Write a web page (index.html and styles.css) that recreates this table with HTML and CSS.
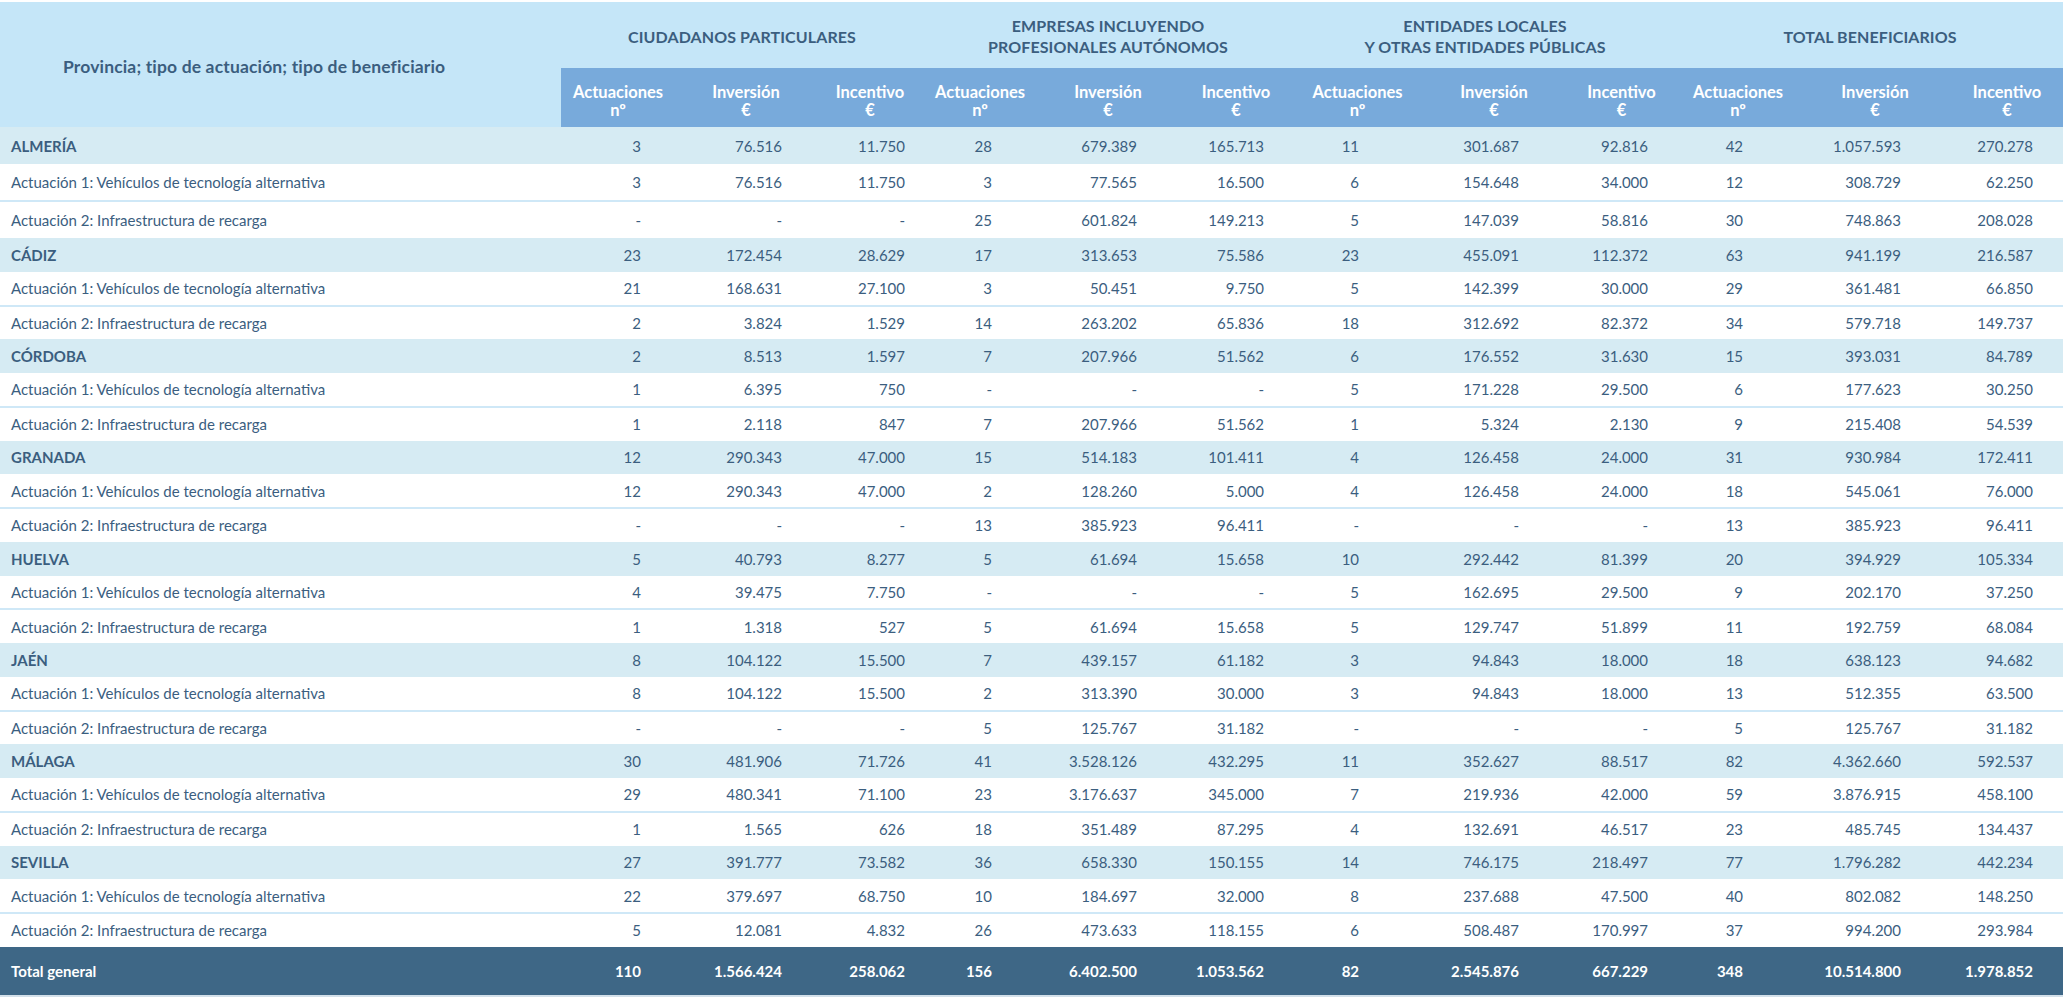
FILE: index.html
```html
<!DOCTYPE html>
<html lang="es">
<head>
<meta charset="utf-8">
<title>Actuaciones por provincia</title>
<link rel="stylesheet" href="styles.css">
</head>
<body>
<div class="wrap">
<table class="grid">
  <colgroup>
    <col class="c0">
    <col class="w114"><col class="w142"><col class="w106">
    <col class="w114"><col class="w142"><col class="w114">
    <col class="w129"><col class="w144"><col class="w111">
    <col class="w122"><col class="w152"><col class="w112">
  </colgroup>
  <thead>
    <tr class="h1">
      <th rowspan="2" class="lead">Provincia; tipo de actuación; tipo de beneficiario</th>
      <th colspan="3" class="grp">CIUDADANOS PARTICULARES</th>
      <th colspan="3" class="grp">EMPRESAS INCLUYENDO<br>PROFESIONALES AUTÓNOMOS</th>
      <th colspan="3" class="grp">ENTIDADES LOCALES<br>Y OTRAS ENTIDADES PÚBLICAS</th>
      <th colspan="3" class="grp">TOTAL BENEFICIARIOS</th>
    </tr>
    <tr class="h2">
      <th>Actuaciones<br>nº</th><th>Inversión<br>€</th><th>Incentivo<br>€</th>
      <th>Actuaciones<br>nº</th><th>Inversión<br>€</th><th>Incentivo<br>€</th>
      <th>Actuaciones<br>nº</th><th>Inversión<br>€</th><th>Incentivo<br>€</th>
      <th>Actuaciones<br>nº</th><th>Inversión<br>€</th><th>Incentivo<br>€</th>
    </tr>
  </thead>
  <tbody>
    <tr class="prov"><td>ALMERÍA</td><td>3</td><td>76.516</td><td>11.750</td><td>28</td><td>679.389</td><td>165.713</td><td>11</td><td>301.687</td><td>92.816</td><td>42</td><td>1.057.593</td><td>270.278</td></tr>
    <tr class="act1"><td>Actuación 1: Vehículos de tecnología alternativa</td><td>3</td><td>76.516</td><td>11.750</td><td>3</td><td>77.565</td><td>16.500</td><td>6</td><td>154.648</td><td>34.000</td><td>12</td><td>308.729</td><td>62.250</td></tr>
    <tr class="act2"><td>Actuación 2: Infraestructura de recarga</td><td>-</td><td>-</td><td>-</td><td>25</td><td>601.824</td><td>149.213</td><td>5</td><td>147.039</td><td>58.816</td><td>30</td><td>748.863</td><td>208.028</td></tr>

    <tr class="prov"><td>CÁDIZ</td><td>23</td><td>172.454</td><td>28.629</td><td>17</td><td>313.653</td><td>75.586</td><td>23</td><td>455.091</td><td>112.372</td><td>63</td><td>941.199</td><td>216.587</td></tr>
    <tr class="act1"><td>Actuación 1: Vehículos de tecnología alternativa</td><td>21</td><td>168.631</td><td>27.100</td><td>3</td><td>50.451</td><td>9.750</td><td>5</td><td>142.399</td><td>30.000</td><td>29</td><td>361.481</td><td>66.850</td></tr>
    <tr class="act2"><td>Actuación 2: Infraestructura de recarga</td><td>2</td><td>3.824</td><td>1.529</td><td>14</td><td>263.202</td><td>65.836</td><td>18</td><td>312.692</td><td>82.372</td><td>34</td><td>579.718</td><td>149.737</td></tr>

    <tr class="prov"><td>CÓRDOBA</td><td>2</td><td>8.513</td><td>1.597</td><td>7</td><td>207.966</td><td>51.562</td><td>6</td><td>176.552</td><td>31.630</td><td>15</td><td>393.031</td><td>84.789</td></tr>
    <tr class="act1"><td>Actuación 1: Vehículos de tecnología alternativa</td><td>1</td><td>6.395</td><td>750</td><td>-</td><td>-</td><td>-</td><td>5</td><td>171.228</td><td>29.500</td><td>6</td><td>177.623</td><td>30.250</td></tr>
    <tr class="act2"><td>Actuación 2: Infraestructura de recarga</td><td>1</td><td>2.118</td><td>847</td><td>7</td><td>207.966</td><td>51.562</td><td>1</td><td>5.324</td><td>2.130</td><td>9</td><td>215.408</td><td>54.539</td></tr>

    <tr class="prov"><td>GRANADA</td><td>12</td><td>290.343</td><td>47.000</td><td>15</td><td>514.183</td><td>101.411</td><td>4</td><td>126.458</td><td>24.000</td><td>31</td><td>930.984</td><td>172.411</td></tr>
    <tr class="act1"><td>Actuación 1: Vehículos de tecnología alternativa</td><td>12</td><td>290.343</td><td>47.000</td><td>2</td><td>128.260</td><td>5.000</td><td>4</td><td>126.458</td><td>24.000</td><td>18</td><td>545.061</td><td>76.000</td></tr>
    <tr class="act2"><td>Actuación 2: Infraestructura de recarga</td><td>-</td><td>-</td><td>-</td><td>13</td><td>385.923</td><td>96.411</td><td>-</td><td>-</td><td>-</td><td>13</td><td>385.923</td><td>96.411</td></tr>

    <tr class="prov"><td>HUELVA</td><td>5</td><td>40.793</td><td>8.277</td><td>5</td><td>61.694</td><td>15.658</td><td>10</td><td>292.442</td><td>81.399</td><td>20</td><td>394.929</td><td>105.334</td></tr>
    <tr class="act1"><td>Actuación 1: Vehículos de tecnología alternativa</td><td>4</td><td>39.475</td><td>7.750</td><td>-</td><td>-</td><td>-</td><td>5</td><td>162.695</td><td>29.500</td><td>9</td><td>202.170</td><td>37.250</td></tr>
    <tr class="act2"><td>Actuación 2: Infraestructura de recarga</td><td>1</td><td>1.318</td><td>527</td><td>5</td><td>61.694</td><td>15.658</td><td>5</td><td>129.747</td><td>51.899</td><td>11</td><td>192.759</td><td>68.084</td></tr>

    <tr class="prov"><td>JAÉN</td><td>8</td><td>104.122</td><td>15.500</td><td>7</td><td>439.157</td><td>61.182</td><td>3</td><td>94.843</td><td>18.000</td><td>18</td><td>638.123</td><td>94.682</td></tr>
    <tr class="act1"><td>Actuación 1: Vehículos de tecnología alternativa</td><td>8</td><td>104.122</td><td>15.500</td><td>2</td><td>313.390</td><td>30.000</td><td>3</td><td>94.843</td><td>18.000</td><td>13</td><td>512.355</td><td>63.500</td></tr>
    <tr class="act2"><td>Actuación 2: Infraestructura de recarga</td><td>-</td><td>-</td><td>-</td><td>5</td><td>125.767</td><td>31.182</td><td>-</td><td>-</td><td>-</td><td>5</td><td>125.767</td><td>31.182</td></tr>

    <tr class="prov"><td>MÁLAGA</td><td>30</td><td>481.906</td><td>71.726</td><td>41</td><td>3.528.126</td><td>432.295</td><td>11</td><td>352.627</td><td>88.517</td><td>82</td><td>4.362.660</td><td>592.537</td></tr>
    <tr class="act1"><td>Actuación 1: Vehículos de tecnología alternativa</td><td>29</td><td>480.341</td><td>71.100</td><td>23</td><td>3.176.637</td><td>345.000</td><td>7</td><td>219.936</td><td>42.000</td><td>59</td><td>3.876.915</td><td>458.100</td></tr>
    <tr class="act2"><td>Actuación 2: Infraestructura de recarga</td><td>1</td><td>1.565</td><td>626</td><td>18</td><td>351.489</td><td>87.295</td><td>4</td><td>132.691</td><td>46.517</td><td>23</td><td>485.745</td><td>134.437</td></tr>

    <tr class="prov"><td>SEVILLA</td><td>27</td><td>391.777</td><td>73.582</td><td>36</td><td>658.330</td><td>150.155</td><td>14</td><td>746.175</td><td>218.497</td><td>77</td><td>1.796.282</td><td>442.234</td></tr>
    <tr class="act1"><td>Actuación 1: Vehículos de tecnología alternativa</td><td>22</td><td>379.697</td><td>68.750</td><td>10</td><td>184.697</td><td>32.000</td><td>8</td><td>237.688</td><td>47.500</td><td>40</td><td>802.082</td><td>148.250</td></tr>
    <tr class="act2"><td>Actuación 2: Infraestructura de recarga</td><td>5</td><td>12.081</td><td>4.832</td><td>26</td><td>473.633</td><td>118.155</td><td>6</td><td>508.487</td><td>170.997</td><td>37</td><td>994.200</td><td>293.984</td></tr>
  </tbody>
  <tfoot>
    <tr class="total"><td>Total general</td><td>110</td><td>1.566.424</td><td>258.062</td><td>156</td><td>6.402.500</td><td>1.053.562</td><td>82</td><td>2.545.876</td><td>667.229</td><td>348</td><td>10.514.800</td><td>1.978.852</td></tr>
  </tfoot>
</table>
</div>
</body>
</html>
```

FILE: styles.css
```css
html, body {
  margin: 0;
  padding: 0;
  background: #ffffff;
}

.wrap {
  padding-top: 2px;
}

.grid {
  width: 2063px;
  table-layout: fixed;
  border-collapse: collapse;
  font-family: Lato, "Open Sans", sans-serif;
  color: #3b5e7f;
  font-size: 15px;
}

.c0 { width: 561px; }
.w106 { width: 106px; }
.w111 { width: 111px; }
.w112 { width: 112px; }
.w114 { width: 114px; }
.w122 { width: 122px; }
.w129 { width: 129px; }
.w142 { width: 142px; }
.w144 { width: 144px; }
.w152 { width: 152px; }

.grid th,
.grid td {
  padding: 0;
  white-space: nowrap;
}

/* header */
.h1 { height: 66px; }
.h2 { height: 59px; }

.grid .lead {
  background: #c5e6f8;
  text-align: left;
  padding-left: 63px;
  padding-top: 4px;
  font-size: 17.5px;
  font-weight: 700;
  letter-spacing: 0.15px;
  color: #3b5e7f;
}

.grid .grp {
  background: #c5e6f8;
  font-size: 16px;
  font-weight: 700;
  line-height: 21px;
  color: #3b5e7f;
  text-align: center;
  letter-spacing: 0.1px;
  padding-top: 2px;
}

.grid .h2 th {
  background: #78aadb;
  color: #ffffff;
  font-size: 16.5px;
  font-weight: 700;
  line-height: 18px;
  text-align: center;
  vertical-align: middle;
  padding-top: 6px;
}

/* body */
.grid tbody td,
.grid tfoot td {
  text-align: right;
  vertical-align: middle;
}

.grid tbody td:first-child,
.grid tfoot td:first-child {
  text-align: left;
  padding-left: 11px;
}

.grid tbody tr { height: 33.75px; }
.grid tbody tr:nth-child(-n+3) { height: 37px; }

.prov { background: #d6ebf3; }
.prov td:first-child { font-weight: 700; }

.act1 td { border-bottom: 2px solid #cfe8f7; }

/* numeric column alignment */
.grid td:nth-child(2)  { padding-right: 34px; }
.grid td:nth-child(3)  { padding-right: 35px; }
.grid td:nth-child(4)  { padding-right: 18px; }
.grid td:nth-child(5)  { padding-right: 45px; }
.grid td:nth-child(6)  { padding-right: 42px; }
.grid td:nth-child(7)  { padding-right: 29px; }
.grid td:nth-child(8)  { padding-right: 63px; }
.grid td:nth-child(9)  { padding-right: 47px; }
.grid td:nth-child(10) { padding-right: 29px; }
.grid td:nth-child(11) { padding-right: 56px; }
.grid td:nth-child(12) { padding-right: 50px; }
.grid td:nth-child(13) { padding-right: 30px; }

.total {
  height: 49px;
  background: #3e6786;
  color: #ffffff;
  font-weight: 700;
  border-bottom: 2px solid #d3e0ea;
}
```
